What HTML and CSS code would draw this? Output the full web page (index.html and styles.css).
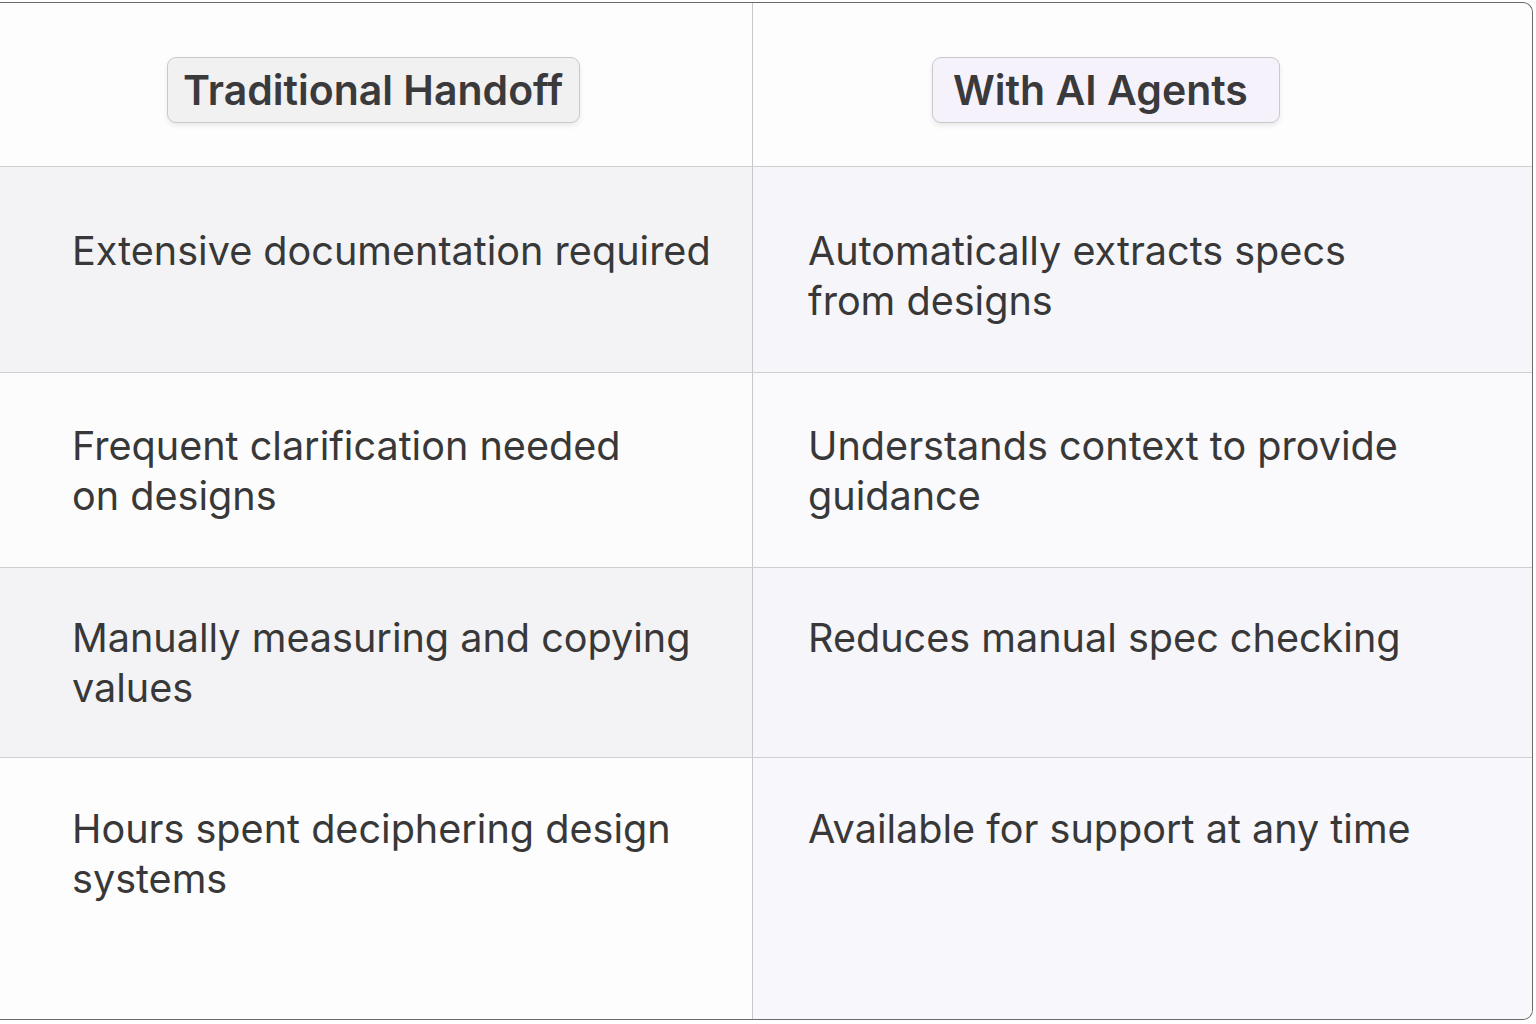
FILE: index.html
```html
<!DOCTYPE html>
<html>
<head>
<meta charset="utf-8">
<link rel="stylesheet" href="styles.css">
</head>
<body>
<div class="card">
  <div class="row head">
    <div class="cell left"><span class="badge grey">Traditional Handoff</span></div>
    <div class="cell right"><span class="badge lav">With AI Agents</span></div>
  </div>
  <div class="row r1 shade">
    <div class="cell left">Extensive documentation required</div>
    <div class="cell right">Automatically extracts specs<br>from designs</div>
  </div>
  <div class="row r2">
    <div class="cell left">Frequent clarification needed<br>on designs</div>
    <div class="cell right">Understands context to provide<br>guidance</div>
  </div>
  <div class="row r3 shade">
    <div class="cell left">Manually measuring and copying<br>values</div>
    <div class="cell right">Reduces manual spec checking</div>
  </div>
  <div class="row r4 last">
    <div class="cell left">Hours spent deciphering design<br>systems</div>
    <div class="cell right">Available for support at any time</div>
  </div>
</div>
</body>
</html>
```
FILE: styles.css
```css
html, body {
  margin: 0;
  padding: 0;
  background: #ffffff;
  width: 1536px;
  height: 1024px;
  overflow: hidden;
}
body {
  font-family: Inter, "Noto Sans", sans-serif;
  color: #383838;
}
.card {
  margin: 2px 0 0 0;
  width: 1533px;
  height: 1018px;
  box-sizing: border-box;
  border: 1.5px solid #6a6a6a;
  border-left: none;
  border-radius: 0 10px 10px 0;
  overflow: hidden;
  display: flex;
  flex-direction: column;
  background: #fdfdfd;
}
.row {
  display: grid;
  grid-template-columns: 753px 1fr;
  border-bottom: 1.5px solid #cfcfd2;
}
.row.last { border-bottom: none; flex: 1; }
.cell {
  font-size: 39.6px;
  line-height: 50px;
  letter-spacing: 0;
  padding-left: 72px;
}
.cell.left { border-right: 1.5px solid #c8c8cc; }
.cell.right { padding-left: 55px; }
.head { height: 164px; box-sizing: border-box; }
.head .cell {
  display: flex;
  align-items: flex-start;
  justify-content: flex-start;
  padding: 54px 0 0 0;
}
.head .cell.left { padding-left: 167px; }
.head .cell.right { padding-left: 179px; }
.badge {
  font-size: 41px;
  font-weight: 600;
  line-height: 64px;
  padding: 0 16px 0 15px;
  border: 1.5px solid #c9c9cc;
  border-radius: 9px;
  color: #3a3a3c;
  box-shadow: 0 3px 5px rgba(0,0,0,0.08);
  letter-spacing: 0;
}
.badge.grey { background: #f1f1f2; }
.badge.lav { background: #f6f2fc; padding: 0 31px 0 20px; }
.r1 { height: 206px; box-sizing: border-box; }
.r1 .cell { padding-top: 59px; }
.r2 { height: 195px; box-sizing: border-box; }
.r2 .cell { padding-top: 48px; }
.r3 { height: 190px; box-sizing: border-box; }
.r3 .cell { padding-top: 45px; }
.r4 .cell { padding-top: 46px; }
.shade .cell.left { background: #f3f3f6; }
.shade .cell.right { background: #f6f5fa; }
.r2 .cell.left { background: #fcfcfd; }
.r2 .cell.right { background: #faf9fc; }
.r4 .cell.left { background: #fdfdfd; }
.r4 .cell.right { background: #f8f7fb; }
```
